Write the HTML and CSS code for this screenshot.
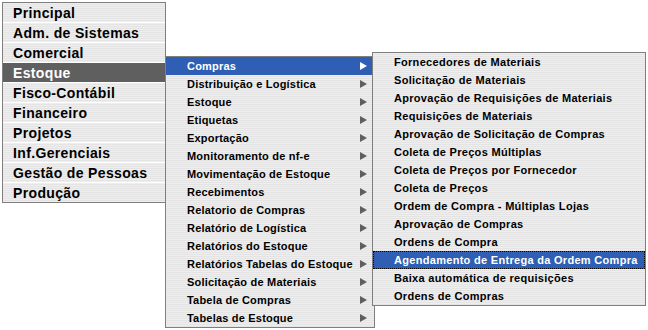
FILE: index.html
```html
<!DOCTYPE html>
<html lang="pt-BR">
<head>
<meta charset="utf-8">
<link rel="stylesheet" href="styles.css">
</head>
<body>
<ul class="menu main">
  <li class="item"><span class="lbl">Principal</span></li>
  <li class="item"><span class="lbl">Adm. de Sistemas</span></li>
  <li class="item"><span class="lbl">Comercial</span></li>
  <li class="item active"><span class="lbl">Estoque</span>
    <ul class="menu sub">
      <li class="item sel has"><span class="lbl">Compras</span><i class="arr"></i>
        <ul class="menu sub2">
          <li class="item"><span class="lbl">Fornecedores de Materiais</span></li>
          <li class="item"><span class="lbl">Solicitação de Materiais</span></li>
          <li class="item"><span class="lbl">Aprovação de Requisições de Materiais</span></li>
          <li class="item"><span class="lbl">Requisições de Materiais</span></li>
          <li class="item"><span class="lbl">Aprovação de Solicitação de Compras</span></li>
          <li class="item"><span class="lbl">Coleta de Preços Múltiplas</span></li>
          <li class="item"><span class="lbl">Coleta de Preços por Fornecedor</span></li>
          <li class="item"><span class="lbl">Coleta de Preços</span></li>
          <li class="item"><span class="lbl">Ordem de Compra - Múltiplas Lojas</span></li>
          <li class="item"><span class="lbl">Aprovação de Compras</span></li>
          <li class="item"><span class="lbl">Ordens de Compra</span></li>
          <li class="item sel focus"><span class="lbl">Agendamento de Entrega da Ordem Compra</span></li>
          <li class="item"><span class="lbl">Baixa automática de requisições</span></li>
          <li class="item"><span class="lbl">Ordens de Compras</span></li>
        </ul>
      </li>
      <li class="item has"><span class="lbl">Distribuição e Logística</span><i class="arr"></i></li>
      <li class="item has"><span class="lbl">Estoque</span><i class="arr"></i></li>
      <li class="item has"><span class="lbl">Etiquetas</span><i class="arr"></i></li>
      <li class="item has"><span class="lbl">Exportação</span><i class="arr"></i></li>
      <li class="item has"><span class="lbl">Monitoramento de nf-e</span><i class="arr"></i></li>
      <li class="item has"><span class="lbl">Movimentação de Estoque</span><i class="arr"></i></li>
      <li class="item has"><span class="lbl">Recebimentos</span><i class="arr"></i></li>
      <li class="item has"><span class="lbl">Relatorio de Compras</span><i class="arr"></i></li>
      <li class="item has"><span class="lbl">Relatório de Logística</span><i class="arr"></i></li>
      <li class="item has"><span class="lbl">Relatórios do Estoque</span><i class="arr"></i></li>
      <li class="item has"><span class="lbl">Relatórios Tabelas do Estoque</span><i class="arr"></i></li>
      <li class="item has"><span class="lbl">Solicitação de Materiais</span><i class="arr"></i></li>
      <li class="item has"><span class="lbl">Tabela de Compras</span><i class="arr"></i></li>
      <li class="item has"><span class="lbl">Tabelas de Estoque</span><i class="arr"></i></li>
    </ul>
  </li>
  <li class="item"><span class="lbl">Fisco-Contábil</span></li>
  <li class="item"><span class="lbl">Financeiro</span></li>
  <li class="item"><span class="lbl">Projetos</span></li>
  <li class="item"><span class="lbl">Inf.Gerenciais</span></li>
  <li class="item"><span class="lbl">Gestão de Pessoas</span></li>
  <li class="item"><span class="lbl">Produção</span></li>
</ul>
</body>
</html>
```
FILE: styles.css
```css
* { box-sizing: border-box; }
html, body { margin: 0; padding: 0; background: #fff; }
body { padding: 2px; overflow: hidden; height: 330px; }

.menu {
  list-style: none;
  margin: 0;
  padding: 0;
  border: 1px solid #7f7f7f;
  background: repeating-linear-gradient(#eeeeee 0 1px, #e4e4e4 1px 2px);
  font-family: "Liberation Sans", Arial, sans-serif;
  font-weight: bold;
  color: #000;
}

.item { position: relative; display: flex; align-items: center; }

.main { width: 164px; }
.main > .item {
  height: 20px;
  border-bottom: 1px solid #fff;
  padding-left: 10px;
  font-size: 14px;
  letter-spacing: 0.35px;
}
.main > .item:last-child { border-bottom: 0; height: 19px; }
.main > .item.active { background: #5f5f5f; }
.main > .item.active > .lbl { color: #fff; }

.sub {
  position: absolute;
  left: 162px;
  top: -7px;
  width: 210px;
  padding: 0;
  font-size: 11px;
  letter-spacing: 0.2px;
}
.sub > .item {
  height: 18px;
  padding-left: 21px;
}
.sub > .item.sel { background: #2e5fb4; color: #fff; }

.arr {
  position: absolute;
  right: 7px;
  top: 5px;
  width: 0;
  height: 0;
  border-style: solid;
  border-width: 4px 0 4px 7px;
  border-color: transparent transparent transparent #5f5f5f;
}
.sel > .arr { border-left-color: #fff; }

.sub2 {
  position: absolute;
  left: 206px;
  top: -5px;
  width: 274px;
  padding: 0;
  letter-spacing: 0.3px;
}
.sub2 > .item {
  height: 18px;
  padding-left: 21px;
  color: #000;
  background: transparent;
}
.sub2 > .item.sel { background: #2e5fb4; color: #fff; }
.sub2 > .item.focus { outline: 1px dotted #000; outline-offset: -1px; }
```
